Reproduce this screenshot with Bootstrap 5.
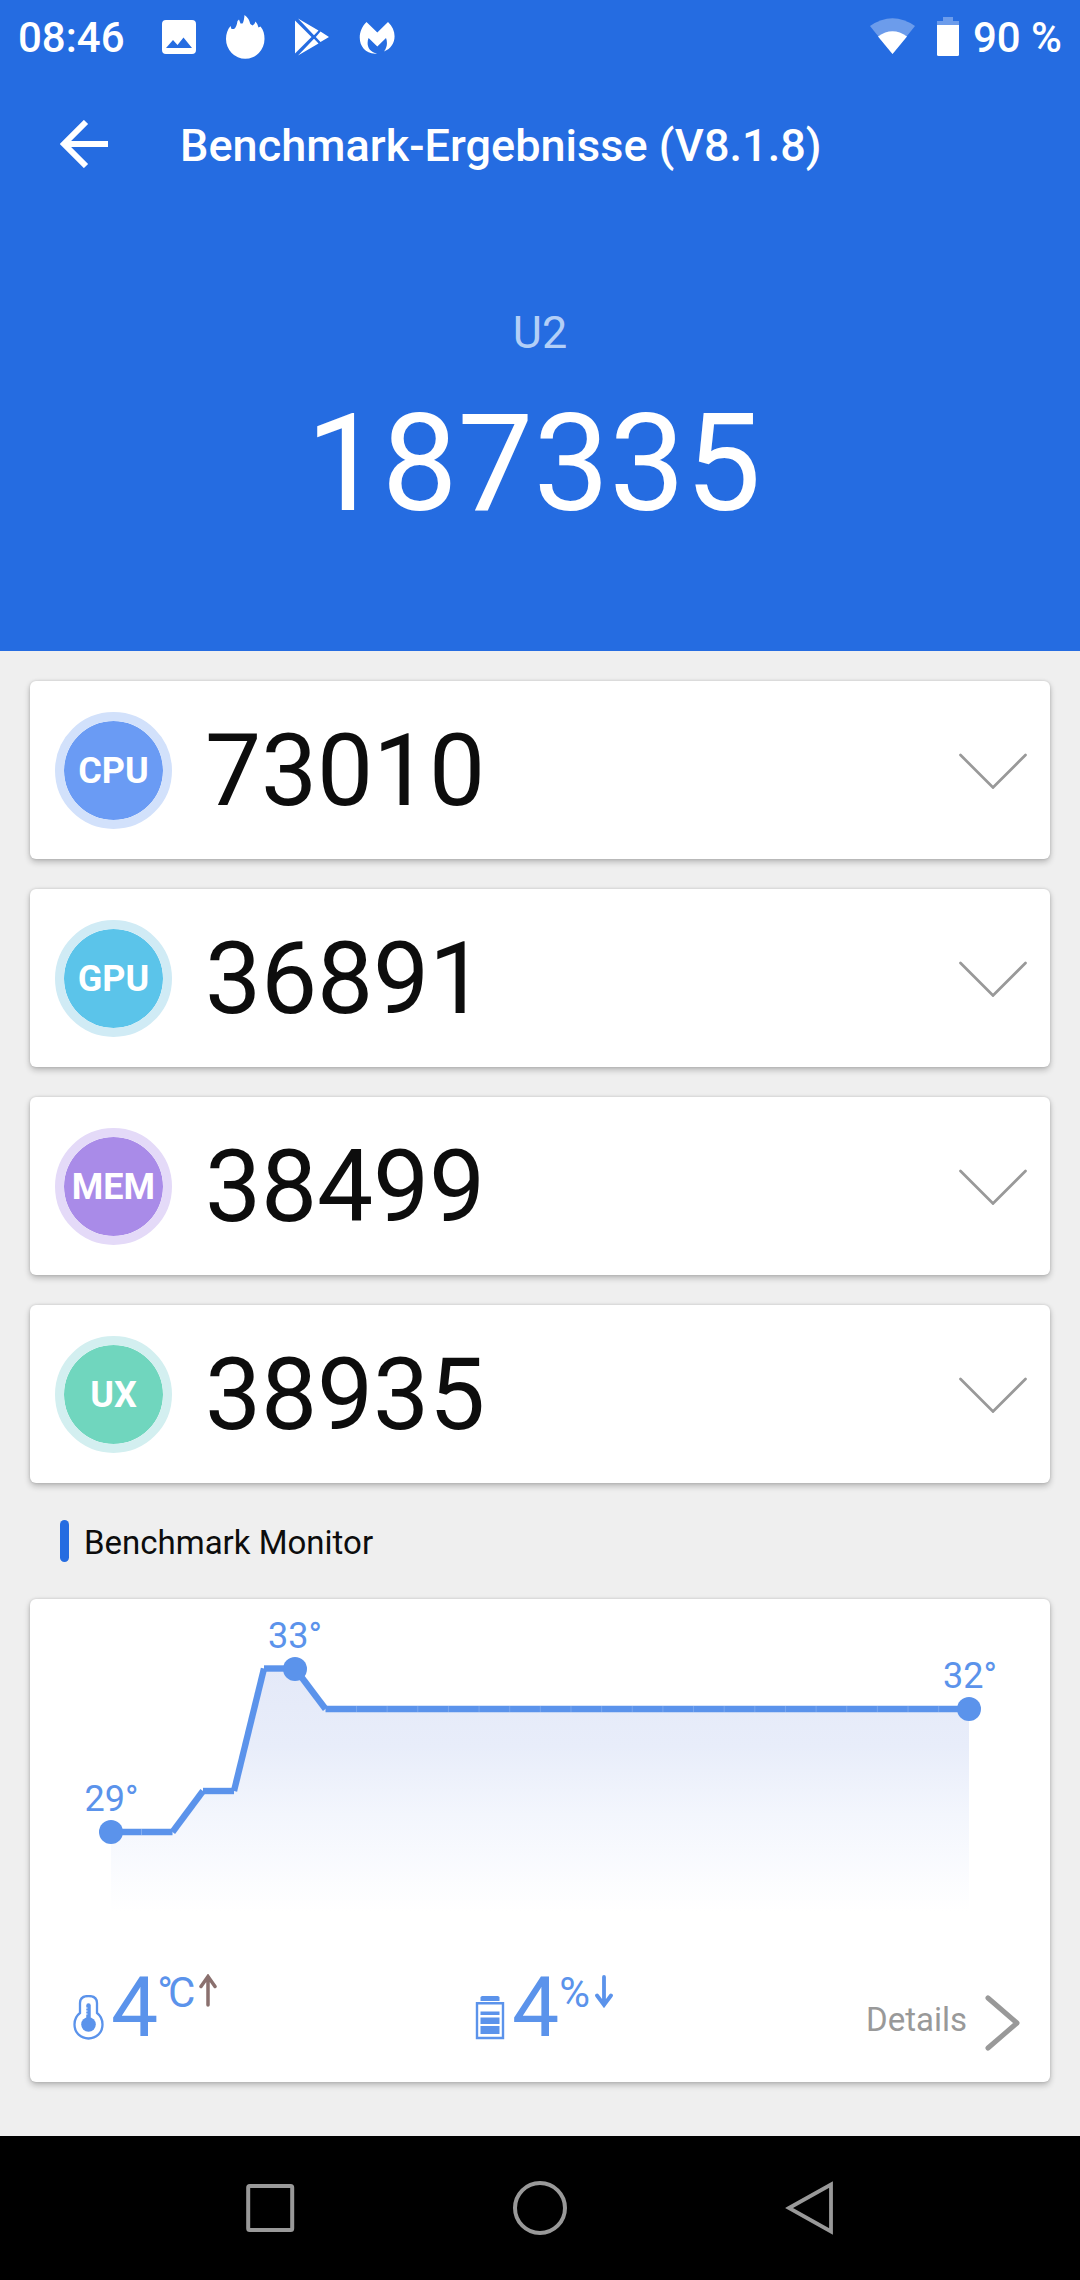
<!DOCTYPE html>
<html lang="de">
<head>
<meta charset="utf-8">
<meta name="viewport" content="width=device-width, initial-scale=1">
<title>Benchmark-Ergebnisse</title>
<link href="https://cdn.jsdelivr.net/npm/bootstrap@5.3.0/dist/css/bootstrap.min.css" rel="stylesheet">
<style>
  body { font-family: Roboto, "Noto Sans", sans-serif; background: #efefef; color: #0d0d0d; width: 1080px; height: 2280px; overflow: hidden; }
  svg { display: block; flex: none; }
  .hero { background: #256ce1; height: 651px; }
  .statusbar { height: 75px; font-size: 42px; line-height: 75px; font-weight: 500; padding: 0 18px; }
  .status-apps { margin-left: 36px; }
  .toolbar { height: 141px; padding-left: 60px; }
  .toolbar h1 { font-size: 45px; line-height: 60px; font-weight: 500; margin: 0 0 0 71px; letter-spacing: .03px; }
  .back-arrow { margin-bottom: 4px; }
  .device { font-size: 45px; line-height: 60px; color: #b3cff7; margin-top: 87px; }
  .total { font-size: 135px; line-height: 160px; margin-top: 21px; padding-right: 13px; }
  .panel { border: 0; border-radius: 6px; background: #fff; box-shadow: 0 3px 6px rgba(0,0,0,.24), 0 0 3px rgba(0,0,0,.14); }
  .score { height: 178px; padding: 1px 23px 0 25px; }
  .score-list { gap: 30px; padding: 30px 30px 0; }
  .disc { width: 117px; height: 117px; border: 9px solid; border-radius: 50%; font-size: 36px; font-weight: 700; color: #fff; background-clip: padding-box; line-height: 36px; }
  .disc-cpu { background-color: #6a9bf4; border-color: #d2e1fb; }
  .disc-gpu { background-color: #5bc4ea; border-color: #d0ebf5; }
  .disc-mem { background-color: #a98be8; border-color: #e4daf8; }
  .disc-ux  { background-color: #70d6be; border-color: #d3eff0; }
  .points { font-size: 100px; line-height: 120px; margin-left: 33px; letter-spacing: -.2px; }
  .section-title { height: 116px; padding-left: 60px; }
  .section-title i { width: 9px; height: 42px; border-radius: 4.5px; background: #256ce1; }
  .section-title h2 { font-size: 33px; line-height: 40px; font-weight: 400; margin: 3px 0 0 15px; }
  .monitor { margin: 0 30px; height: 483px; }
  .monitor text { font-size: 36px; fill: #5b93eb; text-anchor: middle; }
  .stats { height: 124px; color: #5b93eb; }
  .figure-temp { width: 401px; padding-left: 43px; }
  .figure-battery { padding-left: 44px; }
  .thermo-icon { margin: 37px 7px 0 0; }
  .battery-icon { margin: 38px 7px 0 0; }
  .trend { margin: 16px 0 0 5px; }
  .figure-num { font-size: 84px; line-height: 100px; }
  .figure-unit { font-size: 42px; line-height: 42px; margin-top: 14px; }
  .unit-celsius { margin-left: -1px; letter-spacing: -1px; }
  .unit-celsius span { letter-spacing: -5px; }
  .details { font-size: 33px; line-height: 40px; color: #999; margin-top: 42px; }
  .details-arrow { margin: 37px 30px 0 18px; }
  .navkeys { height: 144px; background: #000; margin-top: 54px; }
</style>
</head>
<body>
<header class="hero text-white d-flex flex-column">
  <div class="statusbar d-flex align-items-center">
    <span>08:46</span>
    <svg class="status-apps" width="235" height="60" viewBox="161 7 235 60" fill="#fff">
      <path fill-rule="evenodd" d="M166 19H192Q196 19 196 23V49Q196 53 192 53H166Q162 53 162 49V23Q162 19 166 19ZM166 47H192L183.500 36.500 177.500 44 173 39Z"/>
      <path d="M226 38C226 33 227.500 28.500 230.500 25L231.500 28H234Q236.500 26.500 237.500 20L239 18.500 240.500 22.500H242.500Q244 20.500 244.500 14 249 17 250.300 23L252.500 24.500Q254.500 24 255.500 20.500 257.500 22.500 258.500 26.500L260.500 25.500C263.500 29 264.500 33 264.500 38A19.200 19.800 0 0 1 226 38Z"/>
      <path d="M295 19.500 311.500 36 295 52.500ZM298 17.500 318.500 29.500 314 34.200ZM320.500 30.500 329 36 320.500 41 315.800 36ZM314 37.800 318.500 42.500 298 54.500Z"/>
      <path d="M366.500 21 377.300 31.500 388 21C398 30 396.500 46 384 50.500C387.500 46 387.500 40.500 386 37L377.300 45.500 368.600 37C366.500 42 367 50.500 377.500 52.500C359.500 54.500 354 33 366.500 21Z"/>
    </svg>
    <svg class="ms-auto" width="92" height="60" viewBox="869 7 92 60" fill="#fff">
      <path opacity=".33" d="M870 25Q892.500 9.500 915 25L892.500 53Z"/>
      <path d="M878 35.500Q892.500 25 907 35.500L892.500 53Z"/>
      <path opacity=".33" d="M943 16H953V20H959V24H937V20H943Z"/>
      <path d="M937 24H959V53.500Q959 55 957.500 55H938.500Q937 55 937 53.500Z"/>
    </svg>
    <span class="ms-2 ps-1">90 %</span>
  </div>
  <div class="toolbar d-flex align-items-center">
    <svg class="back-arrow" width="49" height="48" viewBox="0 0 49 48" fill="none" stroke="#fff" stroke-width="6"><path d="M26 2 4 24 26 46M4 24H48"/></svg>
    <h1>Benchmark-Ergebnisse (V8.1.8)</h1>
  </div>
  <div class="device text-center">U2</div>
  <div class="total text-center">187335</div>
</header>

<main>
  <div class="score-list d-flex flex-column">
    <div class="card panel score flex-row align-items-center">
      <div class="disc disc-cpu d-flex align-items-center justify-content-center">CPU</div>
      <div class="points">73010</div>
      <svg class="ms-auto" width="68" height="36" viewBox="0 0 68 36" fill="none" stroke="#999" stroke-width="2.700" stroke-linecap="round"><path d="M1.500 2 34 34.500 66.500 2"/></svg>
    </div>
    <div class="card panel score flex-row align-items-center">
      <div class="disc disc-gpu d-flex align-items-center justify-content-center">GPU</div>
      <div class="points">36891</div>
      <svg class="ms-auto" width="68" height="36" viewBox="0 0 68 36" fill="none" stroke="#999" stroke-width="2.700" stroke-linecap="round"><path d="M1.500 2 34 34.500 66.500 2"/></svg>
    </div>
    <div class="card panel score flex-row align-items-center">
      <div class="disc disc-mem d-flex align-items-center justify-content-center">MEM</div>
      <div class="points">38499</div>
      <svg class="ms-auto" width="68" height="36" viewBox="0 0 68 36" fill="none" stroke="#999" stroke-width="2.700" stroke-linecap="round"><path d="M1.500 2 34 34.500 66.500 2"/></svg>
    </div>
    <div class="card panel score flex-row align-items-center">
      <div class="disc disc-ux d-flex align-items-center justify-content-center">UX</div>
      <div class="points">38935</div>
      <svg class="ms-auto" width="68" height="36" viewBox="0 0 68 36" fill="none" stroke="#999" stroke-width="2.700" stroke-linecap="round"><path d="M1.500 2 34 34.500 66.500 2"/></svg>
    </div>
  </div>

  <div class="section-title d-flex align-items-center">
    <i></i>
    <h2>Benchmark Monitor</h2>
  </div>

  <div class="card panel monitor">
    <svg width="1020" height="359" viewBox="30 1599 1020 359">
      <defs>
        <linearGradient id="fade" gradientUnits="userSpaceOnUse" x1="0" y1="1668" x2="0" y2="1912">
          <stop offset="0" stop-color="#e4e9f8"/><stop offset=".32" stop-color="#e8edfa"/><stop offset=".6" stop-color="#f3f6fd"/><stop offset="1" stop-color="#fff"/>
        </linearGradient>
      </defs>
      <path fill="url(#fade)" d="M111 1832H173L202.500 1791H234L264 1668.500H295L325.500 1709H969V1912H111Z"/>
      <g fill="none" stroke="#5b93eb" stroke-width="6.400">
        <path d="M111 1832H172.500"/><path d="M172.500 1832 203 1791"/><path d="M203 1791H234"/><path d="M234 1791 264 1668.500"/><path d="M264 1668.500H295"/><path d="M295 1668.500 325.500 1709"/><path d="M325.500 1709H969"/>
      </g>
      <path d="M356 1709H950" fill="none" stroke="#fff" stroke-opacity=".18" stroke-width="6" stroke-dasharray="1 29.640"/>
      <path d="M141.500 1829V1835" stroke="#fff" stroke-opacity=".25"/>
      <g fill="#5b93eb"><circle cx="111" cy="1832" r="12"/><circle cx="295" cy="1669" r="12"/><circle cx="969" cy="1709" r="12"/></g>
      <text x="111.500" y="1811">29°</text>
      <text x="295" y="1648">33°</text>
      <text x="970" y="1688">32°</text>
    </svg>
    <div class="stats d-flex align-items-start">
      <div class="figure-temp d-flex align-items-start">
        <svg class="thermo-icon" width="31" height="45" viewBox="0 0 31 45"><path d="M7 8Q7 1 15.500 1 24 1 24 8V18Q29.500 22 29.500 29.500C29.500 38 23 43.500 15.500 43.500S1.500 38 1.500 29.500Q1.500 22 7 18Z" fill="none" stroke="#5b93eb" stroke-width="2.300"/><circle cx="15.500" cy="29.500" r="7.300" fill="#5b93eb"/><path d="M15.500 10.500V26" stroke="#5b93eb" stroke-width="4.500" stroke-linecap="round"/><path d="M12.500 13H14.500M12.500 16H14.500M12.500 19H14.500" stroke="#fff"/></svg>
        <span class="figure-num">4</span>
        <span class="figure-unit unit-celsius"><span>°</span>C</span>
        <svg class="trend" width="18" height="34" viewBox="0 0 18 34" fill="none" stroke="#8a706e" stroke-width="3.500" stroke-linecap="round"><path d="M9 31V3M2 12.500 9 2.500 16 12.500"/></svg>
      </div>
      <div class="figure-battery d-flex align-items-start">
        <svg class="battery-icon" width="30" height="44" viewBox="0 0 30 44" fill="#5b93eb"><path d="M7 0H23L24.500 1V5H5.500V1Z"/><path d="M2 7.200H28V42H2Z" fill="none" stroke="#5b93eb" stroke-width="2.400"/><path d="M5.500 15.500H24.500V19H5.500ZM5.500 21.500H24.500V28H5.500ZM5.500 30H24.500V38H5.500Z"/></svg>
        <span class="figure-num">4</span>
        <span class="figure-unit">%</span>
        <svg class="trend" width="18" height="34" viewBox="0 0 18 34" fill="none" stroke="#5b93eb" stroke-width="3.800" stroke-linecap="round"><path d="M9 3V31M2 21.500 9 31 16 21.500"/></svg>
      </div>
      <div class="d-flex align-items-start ms-auto">
        <span class="details">Details</span>
        <svg class="details-arrow" width="35" height="56" viewBox="0 0 35 56" fill="none" stroke="#999" stroke-width="5" stroke-linecap="round" stroke-linejoin="round"><path d="M3 3 32 28 3 53"/></svg>
      </div>
    </div>
  </div>
</main>

<nav class="navkeys">
  <svg width="1080" height="144" viewBox="0 2136 1080 144" fill="none" stroke="#999" stroke-width="4">
    <rect x="248.200" y="2186" width="44" height="44" rx="1.500"/>
    <circle cx="540" cy="2208" r="25"/>
    <path d="M789 2208 831 2184.500V2231.500Z" stroke-width="3.800"/>
  </svg>
</nav>
<script src="https://cdn.jsdelivr.net/npm/bootstrap@5.3.0/dist/js/bootstrap.bundle.min.js"></script>
</body>
</html>
